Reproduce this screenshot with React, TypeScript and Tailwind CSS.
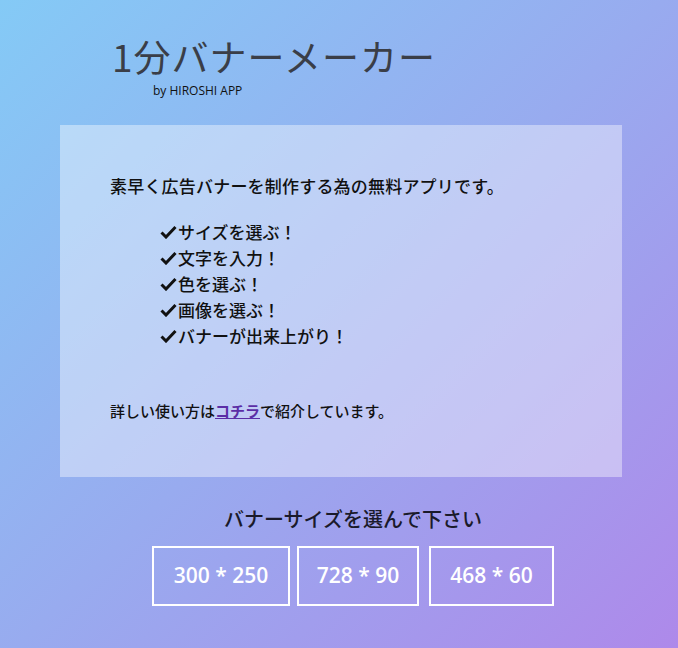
import React from "react";

const jp = { fontFamily: '"Noto Sans CJK JP", "Noto Sans", sans-serif' };

export default function App() {
  const items = ["サイズを選ぶ！", "文字を入力！", "色を選ぶ！", "画像を選ぶ！", "バナーが出来上がり！"];
  return (
    <div
      className="w-[678px] h-[648px] overflow-hidden bg-[linear-gradient(135deg,#84caf6_0%,#98abef_50%,#ae89ea_100%)]"
      style={jp}
    >
      <div className="pt-[36px] pl-[112px]">
        <h1 className="text-[37px] leading-[40px] text-[#3a3e48] tracking-[1px]">1分バナーメーカー</h1>
        <div className="pl-[41px] mt-[7px] text-[12px] leading-[16px] text-[#111]" style={{ fontFamily: '"Open Sans", "Noto Sans", sans-serif' }}>
          by HIROSHI APP
        </div>
      </div>
      <div className="ml-[60px] mt-[26px] w-[562px] h-[352px] bg-white/40 pt-[49px] pl-[50px]">
        <p className="text-[17px] leading-[24px] text-[#111] font-medium tracking-[0.2px]">素早く広告バナーを制作する為の無料アプリです。</p>
        <ul className="mt-[21px] pl-[50px] text-[17px] leading-[26px] text-[#111] font-medium">
          {items.map((t) => (
            <li key={t} className="flex items-center">
              <svg width="17" height="14" viewBox="0 0 17 14" className="mr-[1px]">
                <path d="M1.5 7.5 L6 12 L15.5 2" fill="none" stroke="#111" strokeWidth="3" />
              </svg>
              {t}
            </li>
          ))}
        </ul>
        <p className="mt-[52px] text-[15px] leading-[20px] text-[#111] font-medium">
          詳しい使い方は<a className="underline text-[#5b2ea6] font-bold">コチラ</a>で紹介しています。
        </p>
      </div>
      <div className="mt-[28px] flex flex-col items-start">
        <div className="ml-[224px] text-[20px] leading-[28px] text-[#1a1a2a] font-medium">バナーサイズを選んで下さい</div>
        <div className="mt-[13px] ml-[152px] flex" style={{ fontFamily: '"Open Sans", "Noto Sans", sans-serif' }}>
          <button className="w-[138px] h-[60px] border-2 border-white text-white text-[21px] font-semibold">300 * 250</button>
          <button className="ml-[7px] w-[122px] h-[60px] border-2 border-white text-white text-[21px] font-semibold">728 * 90</button>
          <button className="ml-[10px] w-[125px] h-[60px] border-2 border-white text-white text-[21px] font-semibold">468 * 60</button>
        </div>
      </div>
    </div>
  );
}
